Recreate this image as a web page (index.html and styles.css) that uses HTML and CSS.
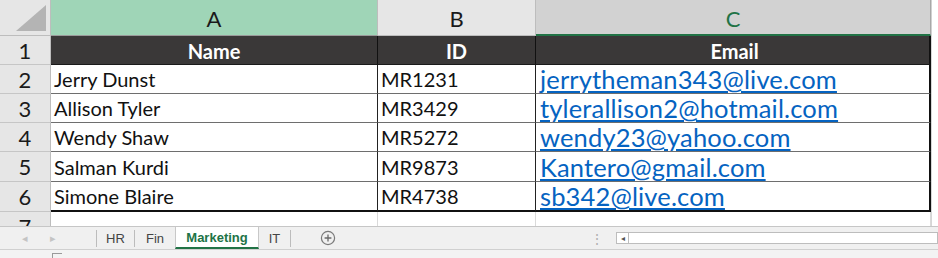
FILE: index.html
```html
<!DOCTYPE html>
<html>
<head>
<meta charset="utf-8">
<link rel="stylesheet" href="styles.css">
</head>
<body>
<div class="sheet">
  <div class="grid">
    <div class="corner"><span class="tri"></span></div>
    <div class="colh sel-a">A</div>
    <div class="colh">B</div>
    <div class="colh sel-c">C</div>
    <div class="colh edge"></div>

    <div class="rowh">1</div>
    <div class="th">Name</div>
    <div class="th">ID</div>
    <div class="th last">Email</div>
    <div class="pad"></div>

    <div class="rowh">2</div>
    <div class="td">Jerry Dunst</div>
    <div class="td">MR1231</div>
    <div class="td last"><a class="link">jerrytheman343@live.com</a></div>
    <div class="pad"></div>

    <div class="rowh">3</div>
    <div class="td">Allison Tyler</div>
    <div class="td">MR3429</div>
    <div class="td last"><a class="link">tylerallison2@hotmail.com</a></div>
    <div class="pad"></div>

    <div class="rowh">4</div>
    <div class="td">Wendy Shaw</div>
    <div class="td">MR5272</div>
    <div class="td last"><a class="link">wendy23@yahoo.com</a></div>
    <div class="pad"></div>

    <div class="rowh">5</div>
    <div class="td">Salman Kurdi</div>
    <div class="td">MR9873</div>
    <div class="td last"><a class="link">Kantero@gmail.com</a></div>
    <div class="pad"></div>

    <div class="rowh">6</div>
    <div class="td bot">Simone Blaire</div>
    <div class="td bot">MR4738</div>
    <div class="td bot last"><a class="link">sb342@live.com</a></div>
    <div class="pad"></div>

    <div class="rowh r7"><span>7</span></div>
    <div class="empty"></div>
    <div class="empty"></div>
    <div class="empty"></div>
    <div class="pad"></div>
  </div>

  <div class="tabbar">
    <div class="nav"><span class="arr">&#9666;</span><span class="arr">&#9656;</span></div>
    <div class="tabs">
      <span class="tab w-hr">HR</span>
      <span class="tab w-fin">Fin</span>
      <span class="tab active">Marketing</span>
      <span class="tab w-it">IT</span>
    </div>
    <div class="add">
      <svg width="16" height="16" viewBox="0 0 16 16"><circle cx="8" cy="8" r="6.6" fill="none" stroke="#7a7a7a" stroke-width="1.2"/><path d="M8 4.6v6.8M4.6 8h6.8" stroke="#6a6a6a" stroke-width="1.3"/></svg>
    </div>
    <div class="dots">&#8942;</div>
    <div class="hscroll"><span class="sbtn">&#9666;</span><span class="strack"></span></div>
  </div>
  <div class="status">
    <span class="sicon"></span>
  </div>
</div>
</body>
</html>
```

FILE: styles.css
```css
* { box-sizing: border-box; }
html, body { margin: 0; padding: 0; }
body {
  width: 938px;
  height: 258px;
  overflow: hidden;
  background: #ffffff;
  font-family: "Lato", "Liberation Sans", sans-serif;
  color: #111;
}
.sheet { width: 938px; height: 258px; display: flex; flex-direction: column; }

.grid {
  display: grid;
  grid-template-columns: 51px 327px 158px 395px 7px;
  grid-template-rows: 36px 29px 29px 29px 29px 30px 30px 14px;
  height: 226px;
}

.corner {
  background: #e6e6e6;
  border-right: 1px solid #bdbdbd;
  border-bottom: 1px solid #bdbdbd;
  position: relative;
}
.tri {
  position: absolute;
  right: 4px;
  bottom: 4px;
  width: 0; height: 0;
  border-left: 30px solid transparent;
  border-bottom: 26px solid #b4b4b4;
}

.colh {
  background: #e6e6e6;
  border-right: 1px solid #bdbdbd;
  border-bottom: 1px solid #bdbdbd;
  display: flex;
  align-items: center;
  justify-content: center;
  font-size: 22px;
  color: #1a1a1a;
  padding-top: 2px;
}
.colh.sel-a { background: #9fd5b7; border-bottom-color: #9a9a9a; }
.colh.sel-c {
  background: #d2d2d2;
  color: #217346;
  border-bottom: 2px solid #217346;
  border-right: 1px solid #a8a8a8;
}
.colh.edge { background: #ffffff; border: none; border-left: 1px solid #d0d0d0; }

.rowh {
  background: #e6e6e6;
  border-right: 1px solid #bdbdbd;
  border-bottom: 1px solid #c6c6c6;
  display: flex;
  align-items: center;
  justify-content: center;
  font-size: 22px;
  color: #1a1a1a;
}
.rowh.r7 { align-items: flex-start; overflow: hidden; border-bottom: none; }
.rowh.r7 span { display: block; height: 10px; overflow: hidden; margin-top: 4px; line-height: 22px; }

.th {
  background: #3a3838;
  color: #ffffff;
  font-weight: 700;
  font-size: 20px;
  display: flex;
  align-items: center;
  justify-content: center;
  border-right: 1px solid #111;
  border-bottom: 1px solid #1a1a1a;
  padding-top: 1px;
}
.td {
  background: #ffffff;
  font-size: 20px;
  display: flex;
  align-items: center;
  padding-left: 3px;
  border-right: 1px solid #222;
  border-bottom: 1px solid #6e6e6e;
  white-space: nowrap;
  overflow: visible;
}
.td.bot { border-bottom: 2px solid #111; }
.last { border-right: 2px solid #111; padding-left: 4px; }

.link {
  color: #0563c1;
  text-decoration: underline;
  text-underline-offset: 2px;
  font-size: 25.5px;
  line-height: 26px;
  letter-spacing: 0.15px;
}

.empty {
  background: #fff;
  border-right: 1px solid #dadada;
}
.pad { background: #fff; border-left: 1px solid #d6d6d6; }

.tabbar {
  height: 24px;
  background: #f0f0f0;
  border-top: 1px solid #c6c6c6;
  border-bottom: 1px solid #d0d0d0;
  display: flex;
  align-items: stretch;
  font-size: 13px;
  color: #444;
}
.nav { width: 96px; display: flex; align-items: center; padding-left: 22px; gap: 22px; }
.arr { color: #c4c4c4; font-size: 11px; }
.tabs { display: flex; align-items: stretch; }
.tab {
  display: flex;
  align-items: center;
  justify-content: center;
  border-left: 1px solid #bcbcbc;
  margin: 3px 0 2px 0;
  font-family: "Liberation Sans", sans-serif;
  font-size: 13px;
  color: #444;
}
.w-hr { width: 38px; }
.w-fin { width: 41px; }
.w-it { width: 32px; border-left: none; border-right: 1px solid #bcbcbc; }
.tab.active {
  width: 84px;
  background: #ffffff;
  color: #217346;
  font-weight: 700;
  margin: 0;
  border-left: 1px solid #c8c8c8;
  border-right: 1px solid #c8c8c8;
  border-bottom: 2px solid #217346;
}
.add { width: 80px; display: flex; align-items: center; justify-content: center; padding-right: 6px; }
.dots { width: 245px; display: flex; align-items: center; justify-content: flex-end; color: #b0b0b0; font-size: 14px; padding-right: 12px; }
.hscroll { flex: 1; display: flex; align-items: center; }
.sbtn {
  width: 13px; height: 12px;
  background: #fff;
  border: 1px solid #bdbdbd;
  font-size: 8px;
  color: #555;
  display: flex; align-items: center; justify-content: center;
}
.strack { flex: 1; height: 12px; background: #fff; border: 1px solid #bdbdbd; border-left: none; }

.status { flex: 1; background: #f3f3f3; position: relative; }
.sicon {
  position: absolute; left: 52px; top: 3px;
  width: 10px; height: 6px;
  border-top: 1px solid #9a9a9a;
  border-left: 1px solid #9a9a9a;
}
```
